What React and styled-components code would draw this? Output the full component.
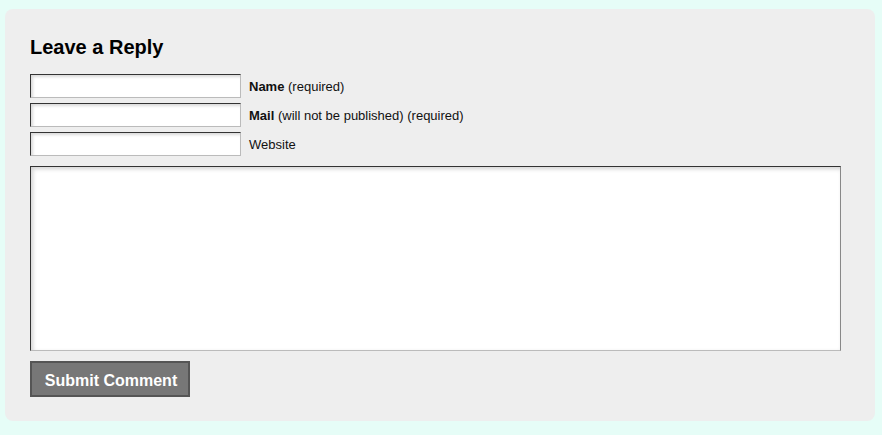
import styled, { createGlobalStyle } from "styled-components";

const GlobalStyle = createGlobalStyle`
  html, body {
    margin: 0;
    padding: 0;
    background: #e6fdf7;
    font-family: "Liberation Sans", Arial, sans-serif;
  }
`;

const App = () => {
  return (
    <Page>
      <GlobalStyle />
      <ReplyBox>
        <Title>Leave a Reply</Title>
        <Form onSubmit={(e) => e.preventDefault()}>
          <FieldRow>
            <TextInput type="text" />
            <Label>
              <strong>Name</strong> (required)
            </Label>
          </FieldRow>
          <FieldRow>
            <TextInput type="text" />
            <Label>
              <strong>Mail</strong> (will not be published) (required)
            </Label>
          </FieldRow>
          <FieldRow>
            <TextInput type="text" />
            <Label>Website</Label>
          </FieldRow>
          <CommentArea />
          <SubmitButton type="submit">Submit Comment</SubmitButton>
        </Form>
      </ReplyBox>
    </Page>
  );
};

const Page = styled.div`
  padding: 9px 7px 13px 5px;
`;

const ReplyBox = styled.div`
  background: #eeeeee;
  border-radius: 8px;
  padding: 26px 25px 24px 25px;
  height: 412px;
  box-sizing: border-box;
`;

const Title = styled.h3`
  margin: 0 0 15px 0;
  font-size: 20px;
  font-weight: bold;
  color: #000;
  line-height: 24px;
`;

const Form = styled.form`
  display: flex;
  flex-direction: column;
  align-items: flex-start;
`;

const FieldRow = styled.div`
  display: flex;
  align-items: center;
  gap: 8px;
  margin-bottom: 5px;
`;

const TextInput = styled.input`
  width: 211px;
  height: 24px;
  box-sizing: border-box;
  margin: 0;
  padding: 2px 4px;
  background: #fff;
  border: 1px solid;
  border-color: #333 #bbb #bbb #333;
  box-shadow: inset 2px 2px 3px rgba(0, 0, 0, 0.15);
  font-family: inherit;
  font-size: 12px;
  outline: none;
`;

const Label = styled.label`
  font-size: 13px;
  line-height: 16px;
  padding-top: 2px;
  color: #111;

  strong {
    font-weight: bold;
  }
`;

const CommentArea = styled.textarea`
  width: 811px;
  height: 185px;
  box-sizing: border-box;
  margin: 5px 0 10px 0;
  padding: 4px;
  resize: none;
  background: #fff;
  border: 1px solid;
  border-color: #333 #888 #bbb #333;
  box-shadow: inset 2px 2px 4px rgba(0, 0, 0, 0.18);
  font-family: inherit;
  outline: none;
`;

const SubmitButton = styled.button`
  width: 160px;
  height: 36px;
  background: #777;
  border: 2px solid #555;
  color: #fff;
  font-family: "Liberation Sans", Arial, sans-serif;
  font-size: 16px;
  font-weight: bold;
  cursor: pointer;
  padding: 3px 0 0 2px;
`;

export default App;
